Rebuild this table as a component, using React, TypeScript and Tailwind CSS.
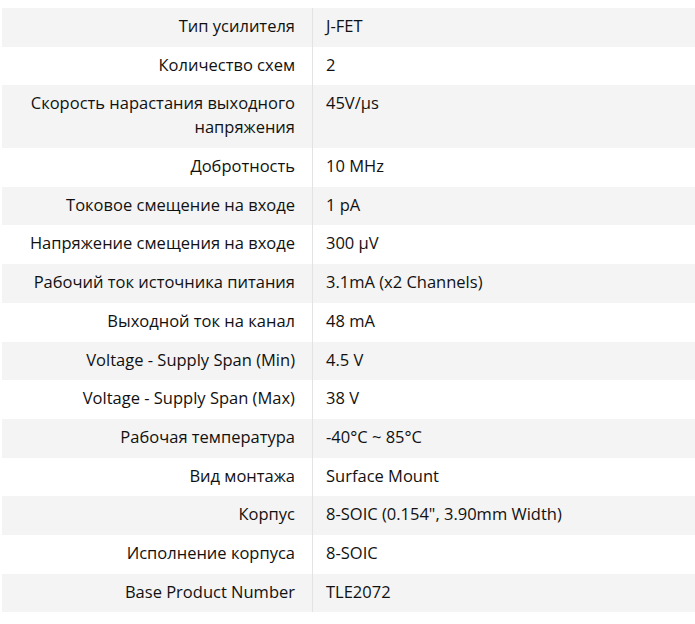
import React from "react";

const rows: [string, string][] = [
  ["Тип усилителя", "J-FET"],
  ["Количество схем", "2"],
  ["Скорость нарастания выходного напряжения", "45V/µs"],
  ["Добротность", "10 MHz"],
  ["Токовое смещение на входе", "1 pA"],
  ["Напряжение смещения на входе", "300 µV"],
  ["Рабочий ток источника питания", "3.1mA (x2 Channels)"],
  ["Выходной ток на канал", "48 mA"],
  ["Voltage - Supply Span (Min)", "4.5 V"],
  ["Voltage - Supply Span (Max)", "38 V"],
  ["Рабочая температура", "-40°C ~ 85°C"],
  ["Вид монтажа", "Surface Mount"],
  ["Корпус", "8-SOIC (0.154\", 3.90mm Width)"],
  ["Исполнение корпуса", "8-SOIC"],
  ["Base Product Number", "TLE2072"],
];

export default function App() {
  return (
    <div className="min-h-screen bg-white pt-[8px] pl-[2px] text-[#111111] text-[16.5px] leading-[24px] font-medium" style={{ fontFamily: '"Open Sans", sans-serif' }}>
      <div className="flex flex-col">
        {rows.map(([k, v], i) => (
          <div key={i} className={`flex ${i % 2 === 0 ? "bg-[#f4f4f4]" : "bg-white"}`}>
            <div className="w-[311px] shrink-0 pl-[20px] pr-[17px] pt-[6px] pb-[8.7px] text-right border-r border-[#e3e3e3]">{k}</div>
            <div className="flex-1 pl-[13px] pt-[6px] pb-[8.7px]">{v}</div>
          </div>
        ))}
      </div>
    </div>
  );
}
